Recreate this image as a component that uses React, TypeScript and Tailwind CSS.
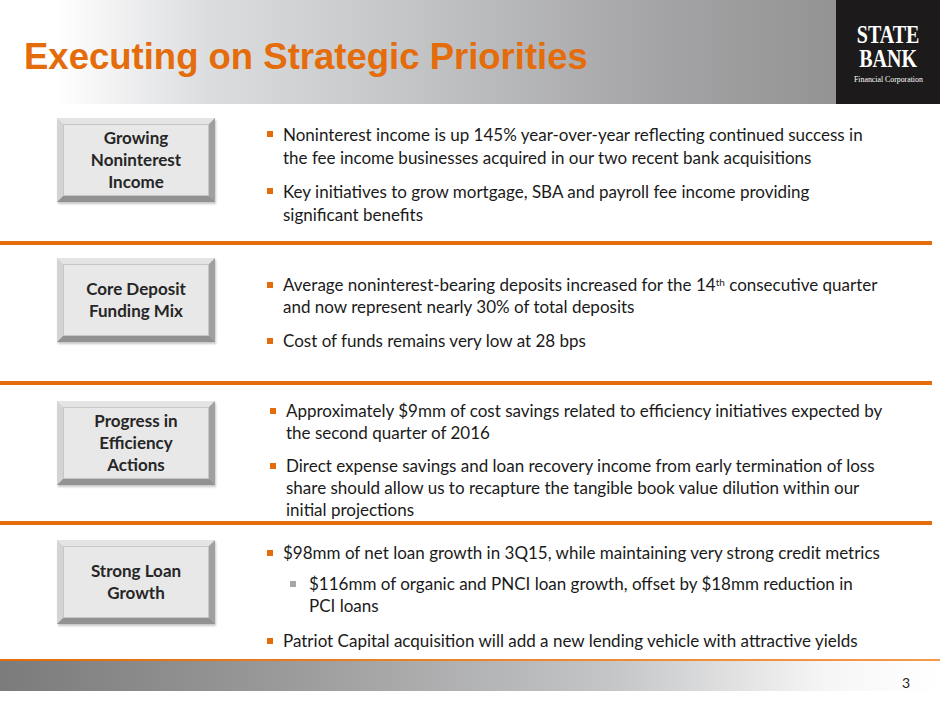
import React from "react";

const BODY = { fontFamily: "Lato, 'Open Sans', sans-serif" };

type Item = { text: React.ReactNode; sub?: boolean };

function Bevel({ label }: { label: React.ReactNode }) {
  return (
    <div className="h-[84px] w-[158px] shrink-0 border-[6px] border-t-[#e4e4e4] border-l-[#d4d4d4] border-r-[#a0a0a0] border-b-[#929292] bg-[#e6e6e6] shadow-[1px_2px_2px_rgba(0,0,0,0.22)]">
      <div className="flex h-full w-full items-center justify-center border border-[#c6c6c6] bg-[#e8e8e8] text-center text-[17px] font-bold leading-[22px] text-[#262626]">
        <div>{label}</div>
      </div>
    </div>
  );
}

function Bullets({ items, indent, leading, gap }: { items: Item[]; indent: number; leading: number; gap: number }) {
  return (
    <ul className="text-[17px] text-[#1a1a1a]" style={{ ...BODY, paddingLeft: indent, lineHeight: `${leading}px` }}>
      {items.map((it, i) => (
        <li
          key={i}
          className={`flex ${it.sub ? "pl-[23px]" : ""}`}
          style={{ marginTop: i === 0 ? 0 : it.sub ? 9 : gap }}
        >
          <span
            className={`mt-[8px] h-[6px] w-[6px] shrink-0 ${it.sub ? "mr-[13px] bg-[#a6a6a6]" : "mr-[10px] bg-[#e46c0a]"}`}
          />
          <span>{it.text}</span>
        </li>
      ))}
    </ul>
  );
}

function Row({
  label,
  items,
  h,
  boxTop,
  textTop,
  indent,
  leading = 23,
  gap = 11,
}: {
  label: React.ReactNode;
  items: Item[];
  h: number;
  boxTop: number;
  textTop: number;
  indent: number;
  leading?: number;
  gap?: number;
}) {
  return (
    <div className="flex" style={{ height: h }}>
      <div className="pl-[57px]" style={{ paddingTop: boxTop }}>
        <Bevel label={label} />
      </div>
      <div style={{ paddingTop: textTop }}>
        <Bullets items={items} indent={indent} leading={leading} gap={gap} />
      </div>
    </div>
  );
}

const Rule = () => <div className="h-[4px] w-[932px] bg-[#e46c0a]" />;

export default function App() {
  return (
    <div className="relative h-[705px] w-[940px] overflow-hidden bg-white" style={BODY}>
      {/* header */}
      <div className="flex h-[104px] bg-[linear-gradient(to_right,#ffffff_0%,#ffffff_6%,#dcdddf_22%,#c2c3c5_45%,#a4a4a6_70%,#8a8a8a_100%)]">
        <div className="flex flex-1 items-center pl-[24px] pt-[10px]">
          <h1
            className="text-[36.5px] font-bold text-[#e46c0a]"
            style={{ fontFamily: "'Liberation Sans', Arial, sans-serif" }}
          >
            Executing on Strategic Priorities
          </h1>
        </div>
        <div
          className="flex w-[104px] flex-col items-center justify-center bg-[#1c1a1a] pt-[2px] text-white"
          style={{ fontFamily: "'Liberation Serif', 'Times New Roman', serif" }}
        >
          <div className="scale-x-[0.8] text-center text-[25px] font-bold leading-[24px]">
            STATE
            <br />
            BANK
          </div>
          <div className="mt-[3px] scale-x-[0.92] text-[8.5px] leading-[10px]">Financial Corporation</div>
        </div>
      </div>

      <Row
        h={137}
        boxTop={14}
        textTop={19}
        indent={52}
        label={<>Growing<br />Noninterest<br />Income</>}
        items={[
          {
            text: (
              <>
                Noninterest income is up 145% year-over-year reflecting continued success in
                <br />
                the fee income businesses acquired in our two recent bank acquisitions
              </>
            ),
          },
          {
            text: (
              <>
                Key initiatives to grow mortgage, SBA and payroll fee income providing
                <br />
                significant benefits
              </>
            ),
          },
        ]}
      />
      <Rule />
      <Row
        h={136}
        boxTop={13}
        textTop={29}
        indent={52}
        leading={22}
        gap={12}
        label={<>Core Deposit<br />Funding Mix</>}
        items={[
          {
            text: (
              <>
                Average noninterest-bearing deposits increased for the 14
                <sup className="text-[10px]">th</sup> consecutive quarter
                <br />
                and now represent nearly 30% of total deposits
              </>
            ),
          },
          { text: <>Cost of funds remains very low at 28 bps</> },
        ]}
      />
      <Rule />
      <Row
        h={136}
        boxTop={16}
        textTop={15}
        indent={55}
        leading={22}
        label={<>Progress in<br />Efficiency<br />Actions</>}
        items={[
          {
            text: (
              <>
                Approximately $9mm of cost savings related to efficiency initiatives expected by
                <br />
                the second quarter of 2016
              </>
            ),
          },
          {
            text: (
              <>
                Direct expense savings and loan recovery income from early termination of loss
                <br />
                share should allow us to recapture the tangible book value dilution within our
                <br />
                initial projections
              </>
            ),
          },
        ]}
      />
      <Rule />
      <Row
        h={134}
        boxTop={15}
        textTop={17}
        indent={52}
        leading={22}
        gap={13}
        label={<>Strong Loan<br />Growth</>}
        items={[
          { text: <>$98mm of net loan growth in 3Q15, while maintaining very strong credit metrics</> },
          {
            sub: true,
            text: (
              <>
                $116mm of organic and PNCI loan growth, offset by $18mm reduction in
                <br />
                PCI loans
              </>
            ),
          },
          { text: <>Patriot Capital acquisition will add a new lending vehicle with attractive yields</> },
        ]}
      />

      {/* footer */}
      <div className="h-[2px] bg-[linear-gradient(to_right,#e46c0a,#f39a4c)]" />
      <div className="flex h-[30px] items-center justify-end bg-[linear-gradient(to_right,#7b7b7b_0%,#9a9a9a_30%,#c4c5c7_65%,#f6f6f6_88%,#ffffff_100%)] pr-[30px]">
        <span className="pt-[12px] text-[14px] text-[#262626]">3</span>
      </div>
    </div>
  );
}
